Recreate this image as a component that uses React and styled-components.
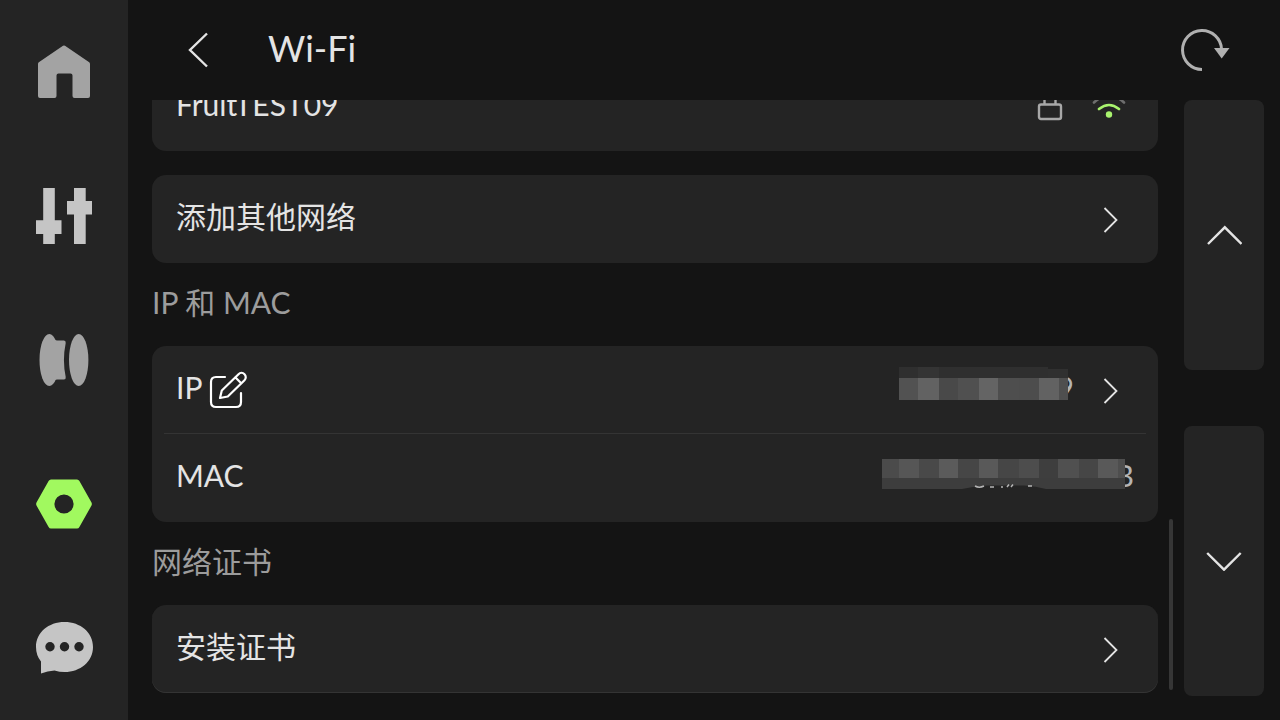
import React from 'react';
import styled, { createGlobalStyle } from 'styled-components';

const GlobalStyle = createGlobalStyle`
  * {
    box-sizing: border-box;
  }
  body {
    margin: 0;
    background: #141414;
    color: #e4e4e4;
    font-family: Lato, 'Noto Sans CJK SC', sans-serif;
  }
  button {
    font: inherit;
    color: inherit;
    border: 0;
    padding: 0;
    background: none;
    cursor: pointer;
  }
  svg {
    display: block;
    flex: none;
  }
`;

const Shell = styled.div`
  display: flex;
  height: 100vh;
`;

const Sidebar = styled.nav`
  display: flex;
  flex-direction: column;
  flex: 0 0 128px;
  background: #242424;
`;

const NavButton = styled.button`
  display: flex;
  flex: 1;
  align-items: center;
  justify-content: center;
  color: ${props => props.$color};
`;

const Main = styled.main`
  display: flex;
  flex-direction: column;
  flex: 1;
  min-width: 0;
`;

const Header = styled.header`
  display: flex;
  align-items: center;
  flex: 0 0 100px;
  padding: 0 48px 0 52px;
`;

const IconButton = styled.button`
  display: flex;
  align-items: center;
  color: ${props => props.$color};
`;

const Title = styled.h1`
  flex: 1;
  margin: 0;
  padding: 0 0 4px 52px;
  font-size: 36px;
  line-height: 48px;
  font-weight: 400;
`;

const Body = styled.div`
  display: flex;
  flex: 1;
  min-height: 0;
  padding: 0 16px 0 24px;
`;

const List = styled.div`
  display: flex;
  flex-direction: column;
  justify-content: flex-end;
  flex: 1;
  min-width: 0;
  padding-bottom: 27px;
  overflow: hidden;
`;

const Card = styled.section`
  flex: none;
  margin-top: ${props => (props.$spaced ? '24px' : '0')};
  border-radius: 14px;
  background: #242424;
  box-shadow: ${props => (props.$edge ? 'inset 0 -1px 0 #343434' : 'none')};
`;

const Row = styled.div`
  display: flex;
  align-items: center;
  width: 100%;
  height: 88px;
  padding: 0 24px;
  text-align: left;
`;

const Divider = styled.hr`
  height: 1px;
  margin: -1px 12px 0;
  border: 0;
  background: #343434;
`;

const Label = styled.span`
  padding-bottom: 6px;
  font-size: 30px;
  line-height: 40px;
`;

const Spacer = styled.span`
  flex: 1;
`;

const Icons = styled.span`
  display: flex;
  align-items: center;
  gap: 28px;
  padding-right: 8px;
`;

const EditButton = styled.button`
  margin-left: 7px;
  color: #ffffff;
`;

const Value = styled.span`
  position: relative;
  padding-bottom: 6px;
  font-size: 30px;
  line-height: 40px;
  color: #b4b4b4;
`;

const Mask = styled.svg`
  position: absolute;
  right: ${props => props.$right};
  top: ${props => props.$top};
`;

const Arrow = styled.span`
  padding: 2px 16px 0 28px;
`;

const SectionTitle = styled.h2`
  flex: none;
  margin: 0;
  padding: 19px 0 24px;
  font-size: 30px;
  line-height: 40px;
  font-weight: 400;
  color: #9c9c9c;
`;

const ScrollTrack = styled.div`
  display: flex;
  align-items: flex-end;
  padding: 0 11px 30px;
`;

const ScrollThumb = styled.div`
  width: 4px;
  height: 171px;
  border-radius: 2px;
  background: #363636;
`;

const Pager = styled.div`
  display: flex;
  flex-direction: column;
  flex: 0 0 80px;
  gap: 56px;
  padding-bottom: 24px;
`;

const PageButton = styled.button`
  display: flex;
  flex: 1;
  align-items: center;
  justify-content: center;
  border-radius: 8px;
  background: #242424;
`;

const HomeIcon = () => (
  <svg width="56" height="56" fill="currentColor">
    <path d="M27 1.8Q28 1.1 29 1.8L53.2 18.3Q54 19 54 20V52Q54 54 52 54H38.5Q36.5 54 36.5 52V31.5Q36.5 29.5 34.5 29.5H22.500Q20.500 29.500 20.500 31.500V52Q20.500 54 18.500 54H4Q2 54 2 52V20Q2 19 2.800 18.300Z" />
  </svg>
);

const TuneIcon = () => (
  <svg width="56" height="56" fill="currentColor">
    <path d="M7.2 0H18.8V32.3H25.5V46H18.8V56H7.2V46H0V32.3H7.2ZM38 0H49.7V13H56V26.5H49.7V56H38V26.5H31V13H38Z" />
  </svg>
);

const SpoolIcon = () => (
  <svg width="50" height="52" fill="currentColor">
    <ellipse cx="10.3" cy="26" rx="9.8" ry="26" />
    <path d="M12 1Q14.500 6.500 18.500 6.500H25Q27 6.500 26.700 9Q23.200 26 26.700 43Q27 45.500 25 45.500H18.500Q14.500 45.500 12 51Z" />
    <ellipse cx="39.7" cy="26" rx="9.7" ry="26" />
  </svg>
);

const NutIcon = () => (
  <svg width="56" height="50" fill="currentColor" fillRule="evenodd">
    <path d="M15 0.5H41Q42.6 0.5 43.4 2L55.5 23.5Q56.2 25 55.5 26.5L43.4 48Q42.6 49.5 41 49.5H15Q13.4 49.5 12.6 48L0.5 26.5Q-0.2 25 0.5 23.5L12.6 2Q13.4 0.5 15 0.5ZM28 15.4A9.6 9.6 0 1 0 28 34.6A9.6 9.6 0 1 0 28 15.4Z" />
  </svg>
);

const ChatIcon = () => (
  <svg width="58" height="52">
    <path
      fill="currentColor"
      d="M29.5 0C45.5 0 58 10.5 58 25C58 39.5 45.5 50 29.5 50Q24.500 50 19.500 48.500Q12.500 49 6 51.500V39.500Q1 33.500 1 25C1 10.500 13.500 0 29.500 0Z"
    />
    <circle cx="15" cy="24.8" r="4.7" fill="#242424" />
    <circle cx="29.5" cy="24.8" r="4.7" fill="#242424" />
    <circle cx="44" cy="24.8" r="4.7" fill="#242424" />
  </svg>
);

const BackIcon = () => (
  <svg width="36" height="36" fill="none" stroke="currentColor" strokeWidth="2.4">
    <path d="M27 1.5L10 18L27 34.5" />
  </svg>
);

const RefreshIcon = () => (
  <svg width="52" height="44">
    <path d="M22 41.5A19.5 19.5 0 1 1 41.5 21" fill="none" stroke="currentColor" strokeWidth="3" />
    <path d="M34 20H49.5L41.7 30.500Z" fill="currentColor" />
  </svg>
);

const ChevronRight = () => (
  <svg width="16" height="28" fill="none" stroke="currentColor" strokeWidth="1.8">
    <path d="M2.5 2L14.5 14L2.5 26" />
  </svg>
);

const ChevronUp = () => (
  <svg width="36" height="20" fill="none" stroke="currentColor" strokeWidth="2.4">
    <path d="M2 19L18.800 2.300L35.500 19" />
  </svg>
);

const ChevronDown = () => (
  <svg width="36" height="20" fill="none" stroke="currentColor" strokeWidth="2.4">
    <path d="M1.200 2L18 18.700L34.700 2" />
  </svg>
);

const LockIcon = () => (
  <svg width="28" height="32" fill="none" stroke="#a8a8a8" strokeWidth="2.4">
    <rect x="3" y="13.5" width="22" height="14.5" rx="2" />
    <path d="M8.5 13.5V8A5.5 5.5 0 0 1 19.5 8V13.5" />
  </svg>
);

const WifiIcon = () => (
  <svg width="34" height="32" fill="none" strokeWidth="2.6" strokeLinecap="round">
    <path d="M2 11.500Q17 -2.500 32 11.500" stroke="#6e6e6e" />
    <path d="M7 18Q17 10 27 18" stroke="#a9f36e" />
    <circle cx="17" cy="23.500" r="3.2" fill="#a9f36e" />
  </svg>
);

const EditIcon = () => (
  <svg width="38" height="38" fill="none" stroke="currentColor" strokeWidth="2.2" strokeLinecap="round" strokeLinejoin="round">
    <path d="M16 6H7Q2 6 2 11V31Q2 36 7 36H27Q32 36 32 31V22" />
    <path d="M11 27L12.8 19.5L29.5 3.2A4.2 4.2 0 0 1 35.5 9.2L18.8 25.5Z" />
    <path d="M26.5 6.5L32 12" />
  </svg>
);

const ipBlocks = [
  [0, 0, 149, 12, '#2f2f2f'],
  [19, 0, 21, 12, '#343434'],
  [149, 2, 20, 10, '#303030'],
  [0, 11, 19, 22, '#525252'],
  [19, 11, 21, 22, '#626262'],
  [40, 11, 19, 22, '#494949'],
  [59, 11, 21, 22, '#505050'],
  [80, 11, 19, 22, '#646464'],
  [99, 11, 21, 22, '#4e4e4e'],
  [120, 11, 20, 22, '#4d4d4d'],
  [140, 11, 20, 22, '#626262'],
  [160, 11, 9, 22, '#4f4f4f'],
];

const macBlocks = [
  [0, 0, 17, 20, '#4b4b4b'],
  [17, 0, 20, 20, '#565656'],
  [37, 0, 20, 20, '#494949'],
  [57, 0, 19, 20, '#5b5b5b'],
  [76, 0, 21, 20, '#464646'],
  [97, 0, 19, 20, '#595959'],
  [116, 0, 21, 20, '#464646'],
  [137, 0, 20, 20, '#4d4d4d'],
  [157, 0, 19, 20, '#3e3e3e'],
  [176, 0, 21, 20, '#505050'],
  [197, 0, 19, 20, '#464646'],
  [216, 0, 20, 20, '#595959'],
  [236, 0, 7, 20, '#4e4e4e'],
  [0, 19, 243, 11, '#3d3d3d'],
];

const Blocks = ({ blocks }) =>
  blocks.map(([x, y, w, h, fill]) => (
    <rect key={`${x}-${y}`} x={x} y={y} width={w} height={h} fill={fill} />
  ));

const navItems = [
  { name: '主页', color: '#a3a3a3', Icon: HomeIcon },
  { name: '控制', color: '#c5c5c5', Icon: TuneIcon },
  { name: '耗材', color: '#a3a3a3', Icon: SpoolIcon },
  { name: '设置', color: '#a1f95f', Icon: NutIcon },
  { name: '消息', color: '#c5c5c5', Icon: ChatIcon },
];

const LinkRow = ({ children }) => (
  <Row as="button">
    <Label>{children}</Label>
    <Spacer />
    <Arrow>
      <ChevronRight />
    </Arrow>
  </Row>
);

const App = () => (
  <Shell>
    <GlobalStyle />
    <Sidebar>
      {navItems.map(({ name, color, Icon }) => (
        <NavButton key={name} $color={color} aria-label={name}>
          <Icon />
        </NavButton>
      ))}
    </Sidebar>
    <Main>
      <Header>
        <IconButton $color="#e4e4e4" aria-label="返回">
          <BackIcon />
        </IconButton>
        <Title>Wi-Fi</Title>
        <IconButton $color="#b0b0b0" aria-label="刷新">
          <RefreshIcon />
        </IconButton>
      </Header>
      <Body>
        <List>
          <Card>
            <Row>
              <Label>FruitTEST09</Label>
              <Spacer />
              <Icons>
                <LockIcon />
                <WifiIcon />
              </Icons>
            </Row>
          </Card>
          <Card $spaced>
            <LinkRow>添加其他网络</LinkRow>
          </Card>
          <SectionTitle>IP 和 MAC</SectionTitle>
          <Card>
            <Row>
              <Label>IP</Label>
              <EditButton aria-label="编辑 IP">
                <EditIcon />
              </EditButton>
              <Spacer />
              <Value>
                9
                <Mask $right="6px" $top="0" width="169" height="33">
                  <Blocks blocks={ipBlocks} />
                </Mask>
              </Value>
              <Arrow>
                <ChevronRight />
              </Arrow>
            </Row>
            <Divider />
            <Row>
              <Label>MAC</Label>
              <Spacer />
              <Value>
                B
                <Mask $right="9px" $top="4px" width="243" height="30">
                  <Blocks blocks={macBlocks} />
                  <path d="M80 30Q92 27 106 26.5H142Q154 27 164 30Z" fill="#242424" />
                  <path
                    d="M93 27Q97 29.5 102 27M108 28H112M119 28H121M125 28L127 25.5M129 28L131 25.5M146 27H150"
                    fill="none"
                    stroke="#b4b4b4"
                    strokeWidth="1.5"
                  />
                </Mask>
              </Value>
            </Row>
          </Card>
          <SectionTitle>网络证书</SectionTitle>
          <Card $edge>
            <LinkRow>安装证书</LinkRow>
          </Card>
        </List>
        <ScrollTrack>
          <ScrollThumb />
        </ScrollTrack>
        <Pager>
          <PageButton aria-label="向上翻页">
            <ChevronUp />
          </PageButton>
          <PageButton aria-label="向下翻页">
            <ChevronDown />
          </PageButton>
        </Pager>
      </Body>
    </Main>
  </Shell>
);

export default App;
